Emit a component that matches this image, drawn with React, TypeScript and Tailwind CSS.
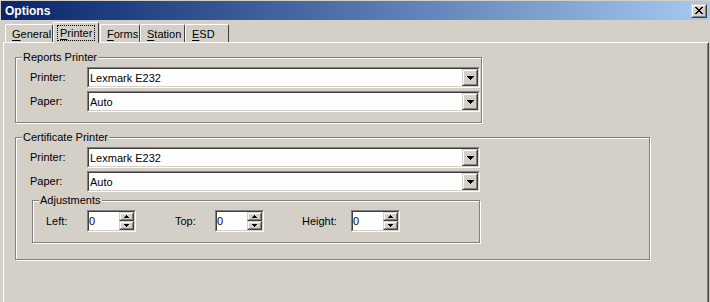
import React from "react";

const Sunken = ({ className = "", children }: { className?: string; children: React.ReactNode }) => (
  <div className={`border border-t-[#808080] border-l-[#808080] border-r-white border-b-white ${className}`}>
    <div className="flex h-full w-full border border-t-[#404040] border-l-[#404040] border-r-[#d4d0c8] border-b-[#d4d0c8] bg-white">
      {children}
    </div>
  </div>
);

const Raised = ({ className = "", children }: { className?: string; children?: React.ReactNode }) => (
  <div className={`border border-t-[#d4d0c8] border-l-[#d4d0c8] border-r-[#404040] border-b-[#404040] ${className}`}>
    <div className="flex h-full w-full items-center justify-center border border-t-white border-l-white border-r-[#808080] border-b-[#808080] bg-[#d4d0c8]">
      {children}
    </div>
  </div>
);

const Combo = ({ value }: { value: string }) => (
  <Sunken className="h-[21px] w-[393px]">
    <div className="flex flex-1 items-center pl-[1px] pt-[1px] leading-none">{value}</div>
    <Raised className="h-[17px] w-[16px]">
      <svg width="7" height="4" viewBox="0 0 7 4" shapeRendering="crispEdges">
        <path d="M0 0h7v1H0zM1 1h5v1H1zM2 2h3v1H2zM3 3h1v1H3z" fill="#000" />
      </svg>
    </Raised>
  </Sunken>
);

const Spinner = () => (
  <Sunken className="h-[22px] w-[49px]">
    <div className="flex flex-1 items-center pt-[1px] leading-none">0</div>
    <div className="flex w-[15px] flex-col">
      <Raised className="h-[9px] w-[15px]">
        <svg width="5" height="3" viewBox="0 0 5 3" shapeRendering="crispEdges">
          <path d="M2 0h1v1H2zM1 1h3v1H1zM0 2h5v1H0z" fill="#000" />
        </svg>
      </Raised>
      <Raised className="h-[9px] w-[15px]">
        <svg width="5" height="3" viewBox="0 0 5 3" shapeRendering="crispEdges">
          <path d="M0 0h5v1H0zM1 1h3v1H1zM2 2h1v1H2z" fill="#000" />
        </svg>
      </Raised>
    </div>
  </Sunken>
);

const Group = ({
  label,
  className = "",
  children,
}: {
  label: string;
  className?: string;
  children: React.ReactNode;
}) => (
  <div
    className={`relative border border-[#808080] shadow-[inset_1px_1px_0_#ffffff,1px_1px_0_#ffffff] ${className}`}
  >
    <span className="absolute left-[6px] top-[-8px] bg-[#d4d0c8] px-[1px] leading-[14px]">{label}</span>
    {children}
  </div>
);

const Row = ({ label, value }: { label: string; value: string }) => (
  <div className="flex h-[21px] items-center">
    <div className="w-[57px]">{label}</div>
    <Combo value={value} />
  </div>
);

const Tab = ({ u, rest, w, selected }: { u: string; rest: string; w: number; selected?: boolean }) => {
  const widthClass =
    w === 48 ? "w-[48px]" : w === 46 ? "w-[46px]" : w === 40 ? "w-[40px]" : w === 45 ? "w-[45px]" : "w-[44px]";
  if (selected) {
    return (
      <div
        className={`relative z-10 -mb-[1px] ${widthClass} h-[21px] rounded-t-[2px] border-l border-t border-r border-l-white border-t-white border-r-[#404040] bg-[#d4d0c8] pl-[3px] pt-[2px]`}
      >
        <div className="flex h-[16px] w-[38px] items-center border border-dotted border-black pl-[2px] leading-none">
          <span className="underline underline-offset-[2px]">{u}</span>
          {rest}
        </div>
      </div>
    );
  }
  return (
    <div
      className={`${widthClass} h-[18px] rounded-t-[2px] border-l border-t border-r border-l-white border-t-white border-r-[#404040] bg-[#d4d0c8] pl-[6px] pt-[3px] leading-[13px]`}
    >
      <span className="underline underline-offset-[2px]">{u}</span>
      {rest}
    </div>
  );
};

export default function App() {
  return (
    <div className="flex h-[302px] w-[710px] flex-col overflow-hidden bg-[#d4d0c8] font-['Liberation_Sans',Arial,sans-serif] text-[11px] text-black">
      {/* Title bar */}
      <div className="ml-[1px] mt-[1px] flex h-[19px] w-[709px] items-center justify-between bg-gradient-to-r from-[#0a246a] to-[#a6caf0] pl-[4px] pr-[3px]">
        <span className="text-[12px] font-bold leading-none text-white">Options</span>
        <Raised className="h-[14px] w-[16px]">
          <svg width="8" height="7" viewBox="0 0 8 7" shapeRendering="crispEdges">
            <path
              d="M0 0h2v1H0zM6 0h2v1H6zM1 1h2v1H1zM5 1h2v1H5zM2 2h4v1H2zM3 3h2v1H3zM2 4h4v1H2zM1 5h2v1H1zM5 5h2v1H5zM0 6h2v1H0zM6 6h2v1H6z"
              fill="#000"
            />
          </svg>
        </Raised>
      </div>

      {/* Tabs */}
      <div className="mt-[2px] flex h-[20px] items-end pl-[5px]">
        <Tab u="G" rest="eneral" w={48} />
        <Tab u="P" rest="rinter" w={46} selected />
        <div className="ml-[1px]" />
        <Tab u="F" rest="orms" w={40} />
        <Tab u="S" rest="tation" w={45} />
        <Tab u="E" rest="SD" w={44} />
      </div>

      {/* Panel */}
      <div className="ml-[3px] flex w-[706px] flex-1 border-l border-t border-r border-l-white border-t-white border-r-[#404040]">
        <div className="flex flex-1 flex-col border-l border-t border-r border-l-[#d4d0c8] border-t-[#d4d0c8] border-r-[#808080] pl-[10px] pt-[13px]">
          <Group label="Reports Printer" className="h-[66px] w-[467px]">
            <div className="flex flex-col gap-[3px] pl-[14px] pt-[9px]">
              <Row label="Printer:" value="Lexmark E232" />
              <Row label="Paper:" value="Auto" />
            </div>
          </Group>

          <Group label="Certificate Printer" className="mt-[14px] h-[123px] w-[635px]">
            <div className="flex flex-col pl-[14px] pt-[9px]">
              <div className="flex flex-col gap-[3px]">
                <Row label="Printer:" value="Lexmark E232" />
                <Row label="Paper:" value="Auto" />
              </div>
            </div>
            <Group label="Adjustments" className="ml-[16px] mt-[8px] h-[43px] w-[448px]">
              <div className="flex items-center pl-[13px] pt-[9px]">
                <div className="w-[41px]">Left:</div>
                <Spinner />
                <div className="ml-[39px] w-[40px]">Top:</div>
                <Spinner />
                <div className="ml-[38px] w-[49px]">Height:</div>
                <Spinner />
              </div>
            </Group>
          </Group>
        </div>
      </div>
    </div>
  );
}
